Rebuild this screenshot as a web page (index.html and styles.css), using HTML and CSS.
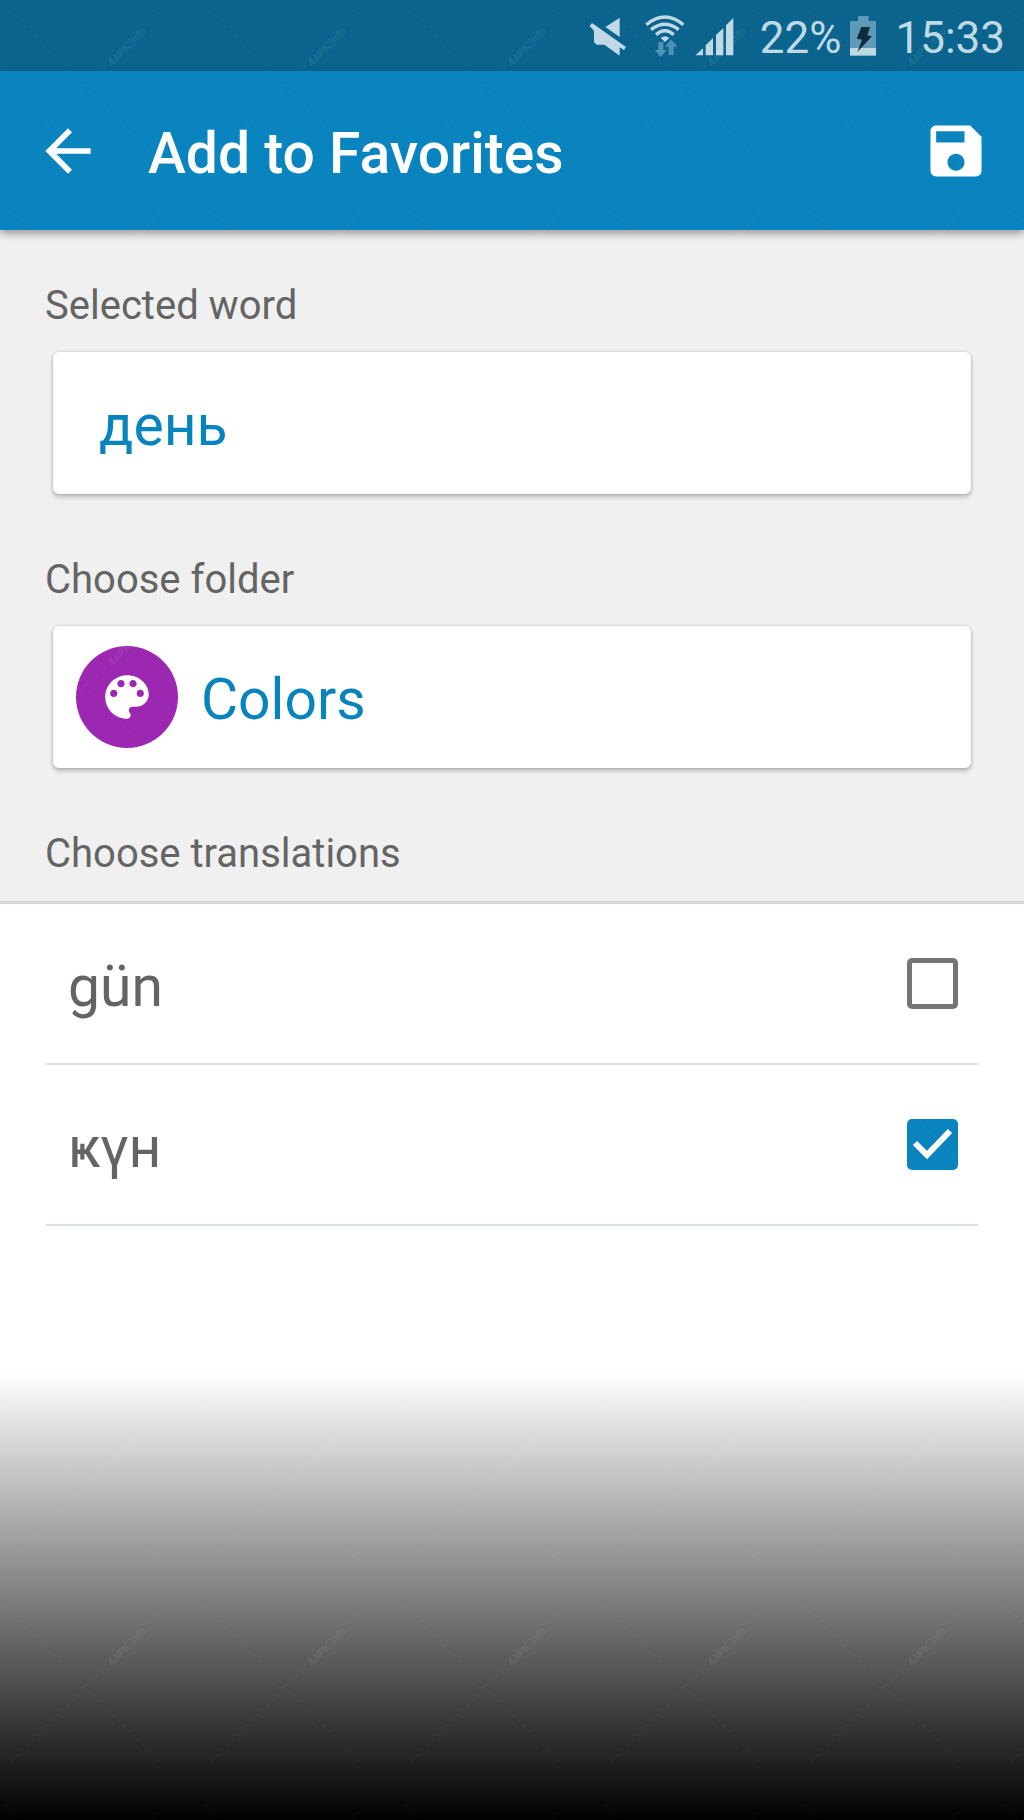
FILE: index.html
```html
<!DOCTYPE html>
<html lang="en">
<head>
  <meta charset="UTF-8">
  <meta name="viewport" content="width=device-width, initial-scale=1.0">
  <title>Add to Favorites</title>
  <link rel="stylesheet" href="styles.css">
</head>
<body>
  <div class="status-bar">
    <svg class="mute" width="38" height="42" viewBox="57 42 114 126" fill="currentColor" aria-hidden="true">
      <path d="M106 78L149 50V108Z"/>
      <path d="M66 66L168 138L162 147L149 139V164L103 131H80L72 123V90L59 75Z"/>
    </svg>
    <svg class="wifi" width="40" height="42" viewBox="224 42 120 126" aria-hidden="true">
      <g fill="none" stroke="currentColor" stroke-width="10">
        <path d="M228 71Q284 25 339 71"/>
        <path d="M242 86Q284 53 325 86"/>
        <path d="M257 101Q284 78 310 101"/>
      </g>
      <path d="M271 111Q284 101 297 111L284 123Z" fill="currentColor"/>
      <path d="M264 123H279V147H289L271 168L253 147H264Z" fill="#4f93b4"/>
      <path d="M302 115L321 137H310V162H295V137H284Z" fill="#4f93b4"/>
    </svg>
    <svg class="signal" width="39" height="42" viewBox="374 42 117 126" fill="currentColor" aria-hidden="true">
      <path d="M375 163L398 142V163Z"/>
      <path d="M406 133L428 111V163H406Z"/>
      <path d="M437 102L459 81V163H437Z"/>
      <path d="M467 73L489 51V163H467Z"/>
    </svg>
    <span class="status-text">22%</span>
    <svg class="battery" width="26" height="42" viewBox="840 42 78 126" aria-hidden="true">
      <path d="M864 45H896V60H918V141H840V60H864Z" fill="#5f9ab8"/>
      <path d="M840 141H918V164H840Z" fill="currentColor"/>
      <path d="M874 78H900L892 103L906 106L862 153L876 116L860 113Z" fill="#102c3c"/>
    </svg>
    <span class="status-text">15:33</span>
  </div>

  <header class="toolbar">
    <button class="icon-button" type="button" aria-label="Back">
      <svg width="68" height="68" viewBox="0 0 24 24" fill="currentColor"><path d="M20 11H7.83l5.59-5.59L12 4l-8 8 8 8 1.41-1.41L7.83 13H20v-2z"/></svg>
    </button>
    <h1 class="title">Add to Favorites</h1>
    <button class="icon-button" type="button" aria-label="Save">
      <svg width="68" height="68" viewBox="0 0 24 24" fill="currentColor"><path d="M17 3H5c-1.11 0-2 .9-2 2v14c0 1.1.89 2 2 2h14c1.1 0 2-.9 2-2V7l-4-4zm-5 16c-1.66 0-3-1.34-3-3s1.34-3 3-3 3 1.34 3 3-1.34 3-3 3zm3-10H5V5h10v4z"/></svg>
    </button>
  </header>

  <main>
    <div class="form">
      <h2 class="label">Selected word</h2>
      <div class="card word">
        <span class="card-text">день</span>
      </div>

      <h2 class="label" id="folder-label">Choose folder</h2>
      <button class="card folder" type="button" aria-describedby="folder-label">
        <span class="folder-icon">
          <svg width="58" height="58" viewBox="0 0 24 24" fill="currentColor" aria-hidden="true"><path d="M12 3c-4.97 0-9 4.03-9 9s4.03 9 9 9c.83 0 1.5-.67 1.5-1.5 0-.39-.15-.74-.39-1.01-.23-.26-.38-.61-.38-.99 0-.83.67-1.5 1.5-1.5H16c2.76 0 5-2.24 5-5 0-4.42-4.03-8-9-8zm-5.5 9c-.83 0-1.5-.67-1.5-1.5S5.67 9 6.5 9 8 9.67 8 10.5 7.33 12 6.5 12zm3-4C8.67 8 8 7.33 8 6.5S8.67 5 9.5 5s1.5.67 1.5 1.5S10.33 8 9.5 8zm5 0c-.83 0-1.5-.67-1.5-1.5S13.67 5 14.5 5s1.5.67 1.5 1.5S15.33 8 14.5 8zm3 4c-.83 0-1.5-.67-1.5-1.5S16.67 9 17.5 9s1.5.67 1.5 1.5-.67 1.5-1.5 1.5z"/></svg>
        </span>
        <span class="card-text">Colors</span>
      </button>

      <h2 class="label">Choose translations</h2>
    </div>

    <ul class="translations">
      <li>
        <label class="translation" for="tr-1">
          <span class="translation-text">gün</span>
          <input class="check" type="checkbox" id="tr-1">
        </label>
      </li>
      <li>
        <label class="translation" for="tr-2">
          <span class="translation-text">ҝүн</span>
          <input class="check" type="checkbox" id="tr-2" checked>
        </label>
      </li>
    </ul>
  </main>

  <div class="fade"></div>

  <!-- repeating watermark over the whole screen -->
  <svg class="watermark" aria-hidden="true">
    <defs>
      <pattern id="mark" width="200" height="200" patternUnits="userSpaceOnUse">
        <path d="M5 5L161 163M12 161L104 68M148 25L160 12" fill="none" stroke="#fff" stroke-dasharray="3 4"/>
        <text class="watermark-text" x="0" y="0" transform="translate(112 67) rotate(-45)">4APK.info</text>
      </pattern>
    </defs>
    <rect width="100%" height="100%" fill="url(#mark)"/>
  </svg>
</body>
</html>
```

FILE: styles.css
```css
* {
  box-sizing: border-box;
}
body {
  position: relative;
  display: flex;
  flex-direction: column;
  min-height: 100vh;
  margin: 0;
  font-family: Roboto, "Noto Sans", sans-serif;
  color: #646464;
  background-color: #fff;
}
h1, h2, ul {
  margin: 0;
  padding: 0;
}
button {
  font-family: inherit;
  border: none;
  cursor: pointer;
}
svg {
  display: block;
  flex: none;
}

/* Status bar */
.status-bar {
  display: flex;
  align-items: center;
  justify-content: flex-end;
  height: 71px;
  padding-right: 19px;
  color: #bfd9e5;
  background-color: #0a648d;
}
.status-text {
  padding-top: 5px;
  font-size: 44px;
  line-height: 54px;
}
.wifi {
  margin-left: 18px;
}
.signal {
  margin-left: 10px;
  margin-right: 26px;
}
.battery {
  margin-left: 9px;
  margin-right: 19px;
}

/* Toolbar */
.toolbar {
  position: relative;
  display: flex;
  align-items: center;
  height: 159px;
  padding: 0 34px;
  color: #fff;
  background-color: #0a84bf;
  box-shadow: 0 4px 8px rgba(0, 0, 0, 0.35);
}
.icon-button {
  padding: 0;
  color: inherit;
  background: none;
}
.title {
  flex: 1;
  padding-top: 6px;
  margin-left: 46px;
  font-size: 57px;
  line-height: 66px;
  font-weight: 500;
}

/* Form */
.form {
  padding: 52px 45px 23px;
  background-color: #f0f0f0;
  border-bottom: 3px solid #d5dade;
}
.label {
  font-size: 40px;
  line-height: 48px;
  font-weight: 400;
}
.card {
  display: flex;
  align-items: center;
  width: calc(100% - 16px);
  min-height: 142px;
  margin: 22px 8px 62px;
  padding: 20px 23px;
  border-radius: 6px;
  color: #0783be;
  background-color: #fff;
  box-shadow: 0 3px 4px rgba(0, 0, 0, 0.22), 0 0 3px rgba(0, 0, 0, 0.2);
}
.word {
  padding-left: 46px;
}
.card-text,
.translation-text {
  padding-top: 6px;
  font-size: 57px;
  line-height: 66px;
}
.folder-icon {
  display: flex;
  align-items: center;
  justify-content: center;
  width: 102px;
  height: 102px;
  margin-right: 23px;
  border-radius: 50%;
  color: #fff;
  background-color: #9c27b0;
}

/* Translations */
.translations {
  list-style: none;
  padding: 0 46px;
}
.translation {
  display: flex;
  align-items: center;
  justify-content: space-between;
  min-height: 161px;
  padding: 0 20px 0 22px;
  border-bottom: 2px solid #dde1e4;
  cursor: pointer;
}
.check {
  appearance: none;
  width: 51px;
  height: 51px;
  margin: 0;
  border: 5px solid #757575;
  border-radius: 5px;
}
.check:checked {
  border: none;
  background: #0a84bf url("data:image/svg+xml,%3Csvg xmlns='http://www.w3.org/2000/svg' viewBox='0 0 51 51'%3E%3Cpath d='M8 24L20 36L43 12' fill='none' stroke='%23fff' stroke-width='6'/%3E%3C/svg%3E") no-repeat center / 100%;
}

.fade {
  flex: 1;
  min-height: 300px;
  background: linear-gradient(#fff 146px, #000);
}

.watermark {
  position: absolute;
  top: 0;
  left: 0;
  width: 100%;
  height: 100%;
  opacity: 0.08;
  pointer-events: none;
}
.watermark-text {
  font-size: 11px;
  font-weight: 500;
  fill: #fff;
}
```
